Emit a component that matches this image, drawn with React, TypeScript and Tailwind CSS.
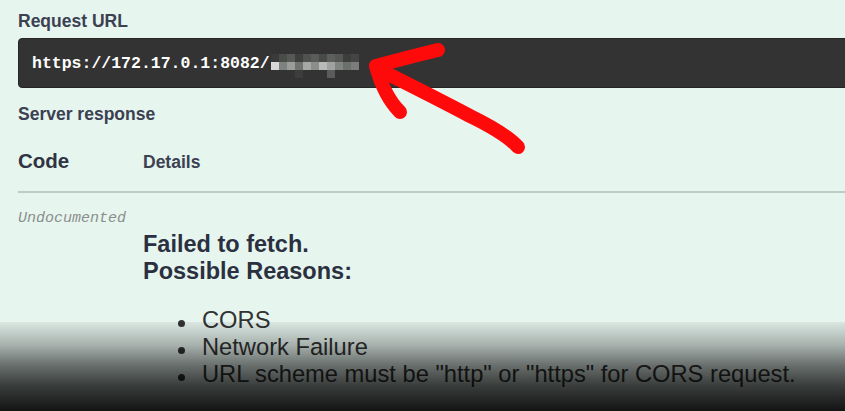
const reasons = ["CORS", "Network Failure", 'URL scheme must be "http" or "https" for CORS request.'];

// pixelated blur over the hidden part of the URL
const mosaic = [
  ["#3a3a3a", "#4a4c4a", "#565956", "#3e403e", "#4f524f", "#5a5c5c", "#474a48", "#5c605c", "#535653", "#3c3e3c", "#444644"],
  ["#d8d8d8", "#7e827e", "#9a9d9a", "#6f736f", "#a5a8a5", "#8a8d8a", "#b8bab8", "#9fa2a0", "#808480", "#6c706c", "#7a7d7a"],
  ["#333333", "#333333", "#333333", "#3c3e3c", "#333333", "#333333", "#333333", "#5a5c5a", "#333333", "#333333", "#333333"],
];

function Mosaic() {
  return (
    <div className="flex flex-col ml-[1px] mt-[6px]">
      {mosaic.map((row, r) => (
        <div key={r} className="flex">
          {row.map((c, i) => (
            <span key={i} className="block w-[8px] h-[8px]" style={{ backgroundColor: c }} />
          ))}
        </div>
      ))}
    </div>
  );
}

export default function App() {
  return (
    <div className="relative w-[845px] h-[411px] overflow-hidden bg-[#e7f5ef] font-['Liberation_Sans',Arial,sans-serif] text-[#3b4151]">
      <div className="w-[900px] pl-[18px]">
        <div className="pt-[11px] text-[17.5px] leading-[20px] font-bold">Request URL</div>

        <div className="mt-[7px] h-[50px] flex items-center rounded-[4px] border border-[#262626] bg-[#333333] pl-[13px]">
          <span className="pt-[2px] font-['Liberation_Mono',monospace] text-[16.5px] font-bold text-white">
            https://172.17.0.1:8082/
          </span>
          <Mosaic />
        </div>

        <div className="mt-[16px] text-[17.5px] leading-[20px] font-bold">Server response</div>

        <div className="mt-[25px] flex items-baseline">
          <div className="w-[125px] text-[20.5px] leading-[24px] font-bold text-[#2f3442]">Code</div>
          <div className="text-[17.5px] leading-[24px] font-bold">Details</div>
        </div>

        <div className="mt-[17px] h-[2px] bg-[#bccdc7]" />

        <div className="mt-[17px] flex">
          <div className="w-[125px] font-['Liberation_Mono',monospace] italic text-[15px] leading-[18px] text-[#8a8f8c]">
            Undocumented
          </div>
          <div className="pt-[21px]">
            <div className="text-[23.5px] leading-[27px] font-bold text-[#2b3040]">
              Failed to fetch.
              <br />
              Possible Reasons:
            </div>
            <ul className="mt-[22px] text-[23.7px] leading-[27px] text-[#333333]">
              {reasons.map((r) => (
                <li key={r} className="flex">
                  <span className="mt-[13px] ml-[35px] mr-[17px] w-[7px] h-[7px] shrink-0 rounded-full bg-[#333333]" />
                  <span>{r}</span>
                </li>
              ))}
            </ul>
          </div>
        </div>
      </div>

      <div className="pointer-events-none absolute left-0 right-0 top-[322px] bottom-0 bg-[linear-gradient(to_bottom,rgba(0,0,0,0.06)_0%,rgba(0,0,0,0.28)_26%,rgba(0,0,0,0.54)_48%,rgba(0,0,0,0.75)_71%,rgba(0,0,0,0.92)_100%)]" />

      <svg className="pointer-events-none absolute inset-0" width="845" height="411" viewBox="0 0 845 411">
        <g fill="none" stroke="#ff0a0a" strokeWidth="14" strokeLinecap="round" strokeLinejoin="round">
          <path d="M438 50 Q405 58 376 66" />
          <path d="M376 66 Q384 96 400 112" />
          <path d="M378 69 Q440 100 470 116 Q505 133 518 147" />
        </g>
      </svg>
    </div>
  );
}
